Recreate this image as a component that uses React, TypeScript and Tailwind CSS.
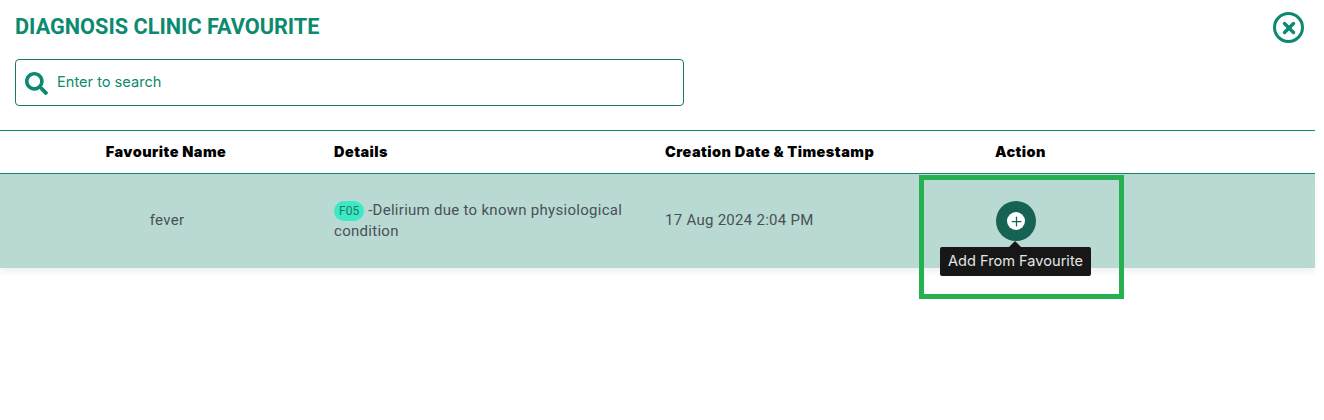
import { Plus, X } from "lucide-react";
import { FaSearch } from "react-icons/fa";

const App = () => {
  return (
    <div className="w-[1315px] h-[420px] bg-white font-['Roboto',sans-serif]">
      <div className="flex items-start justify-between pl-[15px] pr-[11px] pt-[12px]">
        <h2 className="text-[21.7px] leading-[30px] font-bold text-[#0b8a6f]">DIAGNOSIS CLINIC FAVOURITE</h2>
        <button className="w-[31px] h-[31px] rounded-full border-[3px] border-[#0b8a6f] flex items-center justify-center">
          <X size={18} strokeWidth={4.5} className="text-[#0b8a6f]" />
        </button>
      </div>

      <div className="pl-[15px] mt-[16px]">
        <div className="w-[669px] h-[47px] border border-[#1a7a64] rounded-[4px] flex items-center pl-[9px]">
          <FaSearch size={23} className="text-[#0b8a6f] mt-[2px]" />
          <span className="ml-[9px] text-[14.6px] text-[#0b8a6f] font-['Inter',sans-serif]">Enter to search</span>
        </div>
      </div>

      <div className="mt-[24px] border-t border-[#0b8a6f]">
        <div className="flex h-[43px] items-center border-b border-[#0b8a6f] text-[14.5px] tracking-[0.45px] font-black text-black font-['Inter',sans-serif]">
          <div className="w-[334px] pr-[2px] text-center">Favourite Name</div>
          <div className="w-[331px]">Details</div>
          <div className="w-[260px]">Creation Date &amp; Timestamp</div>
          <div className="w-[191px] text-center">Action</div>
        </div>
        <div className="relative flex h-[94px] items-center bg-[#b8dad3] text-[15px] tracking-[0.28px] text-[#4b4f56] shadow-[0_4px_6px_rgba(0,0,0,0.06)]">
          <div className="w-[334px] pb-[1px] text-center">fever</div>
          <div className="w-[331px] pb-[1px] pr-[30px] leading-[20px]">
            <span className="inline-block h-[20px] rounded-[10px] bg-[#3de8c5] px-[5px] text-[12px] leading-[20px] tracking-normal text-[#1f7a68]">F05</span>
            <span> -Delirium due to known physiological condition</span>
          </div>
          <div className="w-[260px] pb-[1px]">17 Aug 2024 2:04 PM</div>
          <div className="w-[182px] flex justify-center">
            <div className="w-[40px] h-[40px] rounded-full bg-[#176353] flex items-center justify-center">
              <div className="w-[18px] h-[18px] rounded-full bg-white flex items-center justify-center">
                <Plus size={15} strokeWidth={2} className="text-[#176353]" />
              </div>
            </div>
          </div>

          <div className="absolute left-[940px] top-[73px] h-[29px] w-[151px] rounded-[2px] bg-[#171717] text-center text-[14.6px] leading-[29px] tracking-normal text-[#e5e5e5] font-['Inter',sans-serif]">
            <div className="absolute left-[69px] -top-[6px] w-0 h-0 border-x-[6px] border-x-transparent border-b-[6px] border-b-[#171717]" />
            Add From Favourite
          </div>
          <div className="absolute left-[919px] top-[1px] h-[124px] w-[205px] border-[5px] border-[#27b04f]" />
        </div>
      </div>
    </div>
  );
};

export default App;
